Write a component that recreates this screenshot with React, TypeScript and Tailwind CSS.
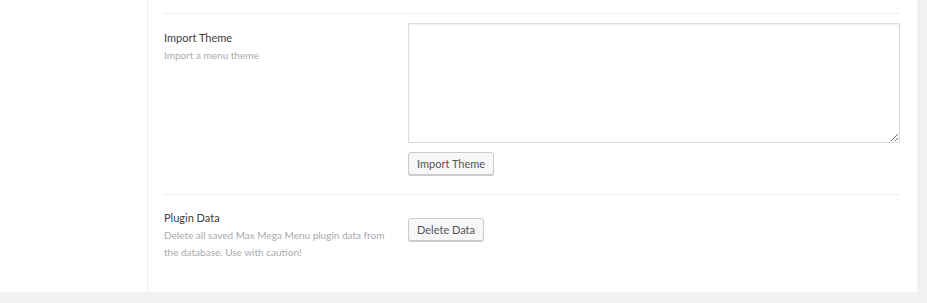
import React from "react";

const font = { fontFamily: 'Lato, "Noto Sans", sans-serif' };

function Label({ title, desc }: { title: string; desc: string }) {
  return (
    <div className="w-[244px] shrink-0 pr-[20px]">
      <div className="text-[11px] leading-[16px] text-[#3c3c3c]">{title}</div>
      <div className="mt-[1px] text-[10px] leading-[17px] text-[#aaa]">{desc}</div>
    </div>
  );
}

function Button({ children }: { children: React.ReactNode }) {
  return (
    <button className="h-[23px] rounded-[3px] border border-[#ccc] bg-[#f7f7f7] px-[8px] text-[11px] leading-[21px] text-[#555] shadow-[0_1px_0_#ccc]">
      {children}
    </button>
  );
}

export default function App() {
  return (
    <div className="flex h-[303px] w-[927px] flex-col bg-[#f1f1f1]" style={font}>
      <div className="flex h-[292px]">
        <div className="w-[148px] shrink-0 border-r border-[#eee] bg-white" />
        <div className="w-[769px] shrink-0 bg-white pl-[15px] pr-[17px]">
          <div className="h-[14px] border-b border-[#eee]" />

          {/* Import theme */}
          <div className="flex border-b border-[#eee] pb-[19px] pt-[9px]">
            <div className="pt-[7px] pl-[1px]">
              <Label title="Import Theme" desc="Import a menu theme" />
            </div>
            <div className="flex flex-col items-start">
              <textarea
                className="h-[120px] w-[492px] resize-y border border-[#ddd] bg-white shadow-[inset_0_1px_2px_rgba(0,0,0,0.07)] outline-none"
                defaultValue=""
              />
              <div className="mt-[9px] flex">
                <Button>Import Theme</Button>
              </div>
            </div>
          </div>

          {/* Plugin data */}
          <div className="flex pt-[15px]">
            <div className="pl-[1px]">
              <Label
                title="Plugin Data"
                desc="Delete all saved Max Mega Menu plugin data from the database. Use with caution!"
              />
            </div>
            <div className="flex pt-[8px]">
              <Button>Delete Data</Button>
            </div>
          </div>
        </div>
      </div>
    </div>
  );
}
